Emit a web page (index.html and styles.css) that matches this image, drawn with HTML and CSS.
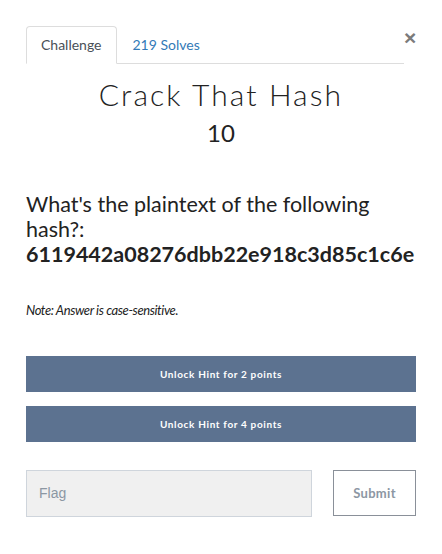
FILE: index.html
```html
<!DOCTYPE html>
<html>
<head>
<meta charset="utf-8">
<link rel="stylesheet" href="styles.css">
</head>
<body>
<div class="modal">
  <div class="header">
    <div class="tabs">
      <div class="tab active">Challenge</div>
      <div class="tab link">219 Solves</div>
    </div>
    <div class="close">&times;</div>
  </div>
  <h2 class="title">Crack That Hash</h2>
  <h3 class="value">10</h3>
  <div class="desc">
    <p class="question">What's the plaintext of the following hash?: <b>6119442a08276dbb22e918c3d85c1c6e</b></p>
    <p class="note">Note: Answer is case-sensitive.</p>
  </div>
  <div class="hints">
    <div class="hint">Unlock Hint for 2 points</div>
    <div class="hint">Unlock Hint for 4 points</div>
  </div>
  <div class="submit-row">
    <div class="flag">Flag</div>
    <div class="submit">Submit</div>
  </div>
</div>
</body>
</html>
```
FILE: styles.css
```css
html, body { margin: 0; padding: 0; background: #fff; }
body { font-family: Lato, "Open Sans", sans-serif; color: #212529; }
.modal { padding: 26px 26px 0 26px; width: 390px; }
.header { display: flex; align-items: flex-start; }
.tabs { flex: 0 0 378px; display: flex; border-bottom: 1px solid #dddddd; height: 37px; }
.tab { font-size: 14px; line-height: 20px; padding: 9px 15px 8px 15px; }
.tab.active { border: 1px solid #dddddd; border-bottom: 1px solid #fff; border-radius: 4px 4px 0 0; color: #495057; margin-bottom: -1px; padding: 8px 14px 8px 14px; background: #fff; }
.tab.link { color: #337ab7; padding-left: 16px; }
.close { flex: 1; text-align: right; font-family: "Liberation Sans", sans-serif; font-size: 21px; font-weight: bold; color: #7b7b7b; line-height: 20px; margin-top: 2px; }
.title { margin: 12px 0 0 0; text-align: center; font-family: Lato, sans-serif; font-weight: 300; font-size: 30px; letter-spacing: 2.1px; line-height: 36px; color: #222; }
.value { margin: 6px 0 0 0; text-align: center; font-family: Lato, sans-serif; font-weight: 400; font-size: 24px; line-height: 30px; color: #222; }
.desc { margin-top: 44px; }
.question { margin: 0; font-size: 21.5px; line-height: 25px; color: #222; }
.question b { font-weight: 700; }
.note { margin: 35px 0 0 0; font-size: 13px; font-style: italic; letter-spacing: -0.4px; color: #222; }
.hints { margin-top: 38px; display: flex; flex-direction: column; gap: 14px; }
.hint { background: #5c7290; color: #fff; height: 36px; line-height: 36px; text-align: center; font-family: Lato, sans-serif; font-size: 10px; font-weight: bold; letter-spacing: 0.65px; }
.submit-row { margin-top: 28px; display: flex; justify-content: space-between; }
.flag { box-sizing: border-box; width: 286px; height: 47px; background: #f0f0f0; border: 1px solid #cfd5dc; font-family: "Liberation Sans", sans-serif; font-size: 14px; color: #8c97a3; line-height: 45px; padding-left: 12px; }
.submit { box-sizing: border-box; width: 83px; height: 46px; border: 1px solid #8a9099; font-family: Lato, sans-serif; font-weight: bold; font-size: 13px; color: #8c97a3; text-align: center; line-height: 44px; letter-spacing: 0.3px; }
```
